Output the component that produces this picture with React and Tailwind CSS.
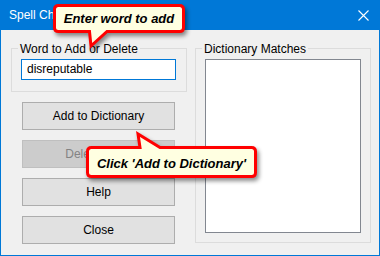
export default function App() {
  const font = { fontFamily: '"Liberation Sans", Arial, sans-serif' };
  return (
    <div className="relative w-[380px] h-[256px] overflow-hidden text-[12px] text-black" style={font}>
      {/* Title bar */}
      <div className="h-[30px] bg-[#0078d7] flex items-center justify-between pl-[9px] pr-[11px] text-white">
        <span className="leading-[16px]">Spell Checker</span>
        <svg width="11" height="11" viewBox="0 0 11 11" className="block">
          <path d="M0.5 0.5 L10.5 10.5 M10.5 0.5 L0.5 10.5" stroke="#ffffff" strokeWidth="1.1" fill="none" />
        </svg>
      </div>
      {/* Body */}
      <div className="h-[226px] bg-[#f0f0f0] border-l border-r border-b border-[#0078d7] pl-[10px] pr-[8px] pt-[18px] flex gap-[8px]">
        {/* Left column */}
        <div className="w-[176px] flex flex-col">
          <div className="border border-[#dcdcdc] pb-[11px]">
            <div className="-mt-[8px] ml-[6px] px-[2px] w-fit bg-[#f0f0f0] leading-[16px]">Word to Add or Delete</div>
            <div className="mt-[2px] ml-[9px] w-[155px] h-[21px] border border-[#0078d7] bg-white pl-[5px] leading-[19px]">disreputable</div>
          </div>
          <div className="mt-[10px] ml-[11px] w-[153px] flex flex-col gap-[10px]">
            <div className="h-[28px] border border-[#adadad] bg-[#e1e1e1] flex items-center justify-center">Add to Dictionary</div>
            <div className="h-[28px] border border-[#bfbfbf] bg-[#cccccc] text-[#838383] flex items-center justify-center">Delete Word</div>
            <div className="h-[28px] border border-[#adadad] bg-[#e1e1e1] flex items-center justify-center">Help</div>
            <div className="h-[28px] border border-[#adadad] bg-[#e1e1e1] flex items-center justify-center">Close</div>
          </div>
        </div>
        {/* Right group */}
        <div className="w-[176px] h-[195px] border border-[#dcdcdc]">
          <div className="-mt-[8px] ml-[6px] px-[2px] w-fit bg-[#f0f0f0] leading-[16px]">Dictionary Matches</div>
          <div className="mt-[2px] ml-[9px] w-[156px] h-[174px] border border-[#828790] bg-white"></div>
        </div>
      </div>

      {/* Callout 1 */}
      <svg className="absolute left-[50px] top-[2px] drop-shadow-[2px_3px_2px_rgba(0,0,0,0.45)]" width="140" height="52" viewBox="0 0 140 52">
        <path
          d="M 8.5 3.5 H 129.5 Q 133.5 3.5 133.5 7.5 V 25.5 Q 133.5 29.5 129.5 29.5 H 57 L 41 44 L 39.5 29.5 H 8.5 Q 4.5 29.5 4.5 25.5 V 7.5 Q 4.5 3.5 8.5 3.5 Z"
          fill="#ffffe1"
          stroke="#ff0000"
          strokeWidth="3"
          strokeLinejoin="miter"
        />
      </svg>
      <div className="absolute left-[53px] top-[10px] w-[132px] h-[18px] leading-[18px] text-center text-[13px] font-bold italic text-black">
        Enter word to add
      </div>

      {/* Callout 2 */}
      <svg className="absolute left-[82px] top-[128px] drop-shadow-[2px_3px_2px_rgba(0,0,0,0.45)]" width="180" height="54" viewBox="0 0 180 54">
        <path
          d="M 9.5 19.5 H 58 L 56 6 L 78 19.5 H 169.5 Q 173.5 19.5 173.5 23.5 V 44.5 Q 173.5 48.5 169.5 48.5 H 9.5 Q 5.5 48.5 5.5 44.5 V 23.5 Q 5.5 19.5 9.5 19.5 Z"
          fill="#ffffe1"
          stroke="#ff0000"
          strokeWidth="3"
          strokeLinejoin="miter"
        />
      </svg>
      <div className="absolute left-[86px] top-[155px] w-[171px] h-[18px] leading-[18px] text-center text-[13px] font-bold italic text-black">
        Click 'Add to Dictionary'
      </div>
    </div>
  );
}
